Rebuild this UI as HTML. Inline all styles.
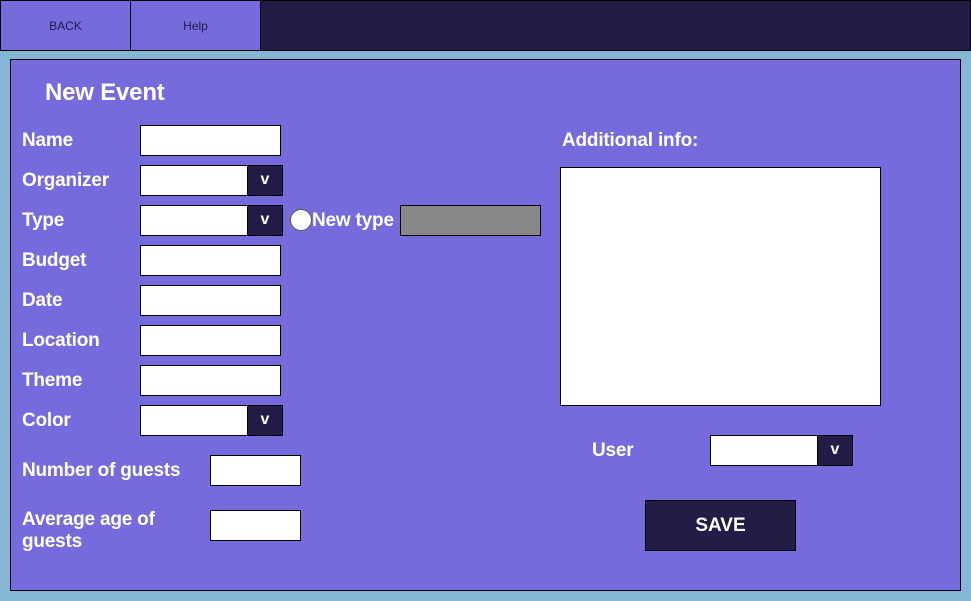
<!DOCTYPE html>
<html><head><style>
*{box-sizing:border-box;margin:0;padding:0}
body{width:971px;height:601px;background:#86b6d6;font-family:"Liberation Sans",sans-serif;position:relative;overflow:hidden}
.a{position:absolute}
.top{left:0;top:0;width:971px;height:51px;background:#221c47;border:1px solid #000}
.btn{top:0;height:51px;width:131px;background:#756bdd;border:1px solid #000;font-size:12px;color:#221c47;display:flex;align-items:center;justify-content:center}
.panel{left:10px;top:59px;width:951px;height:532px;background:#756bdd;border:1px solid #000}
.l{color:#fff;font-weight:bold;font-size:19px;line-height:22px;letter-spacing:-0.2px}
.in{background:#fff;border:1px solid #000;height:31px}
.dd{width:108px;background:#fff;border:1px solid #000;border-right:none;height:31px}
.dk{width:36px;height:31px;background:#221c47;border:1px solid #000;color:#fff;font-weight:bold;font-size:16px;display:flex;align-items:center;justify-content:center;padding-bottom:2px}
</style></head><body>
<div class="a top"></div>
<div class="a btn" style="left:0">BACK</div>
<div class="a btn" style="left:130px">Help</div>
<div class="a panel"></div>
<div class="a l" style="left:45px;top:79px;font-size:24px;line-height:28px">New Event</div>

<div class="a l" style="left:22px;top:130px">Name</div>
<div class="a in" style="left:140px;top:125px;width:141px"></div>
<div class="a l" style="left:22px;top:170px">Organizer</div>
<div class="a dd" style="left:140px;top:165px"></div><div class="a dk" style="left:247px;top:165px">v</div>
<div class="a l" style="left:22px;top:210px">Type</div>
<div class="a dd" style="left:140px;top:205px"></div><div class="a dk" style="left:247px;top:205px">v</div>
<div class="a" style="left:290px;top:209px;width:22px;height:22px;border-radius:50%;background:#fff;border:1px solid #555"></div>
<div class="a l" style="left:312px;top:210px">New type</div>
<div class="a" style="left:400px;top:205px;width:141px;height:31px;background:#888;border:1px solid #000"></div>
<div class="a l" style="left:22px;top:250px">Budget</div>
<div class="a in" style="left:140px;top:245px;width:141px"></div>
<div class="a l" style="left:22px;top:290px">Date</div>
<div class="a in" style="left:140px;top:285px;width:141px"></div>
<div class="a l" style="left:22px;top:330px">Location</div>
<div class="a in" style="left:140px;top:325px;width:141px"></div>
<div class="a l" style="left:22px;top:370px">Theme</div>
<div class="a in" style="left:140px;top:365px;width:141px"></div>
<div class="a l" style="left:22px;top:410px">Color</div>
<div class="a dd" style="left:140px;top:405px"></div><div class="a dk" style="left:247px;top:405px">v</div>
<div class="a l" style="left:22px;top:460px">Number of guests</div>
<div class="a in" style="left:210px;top:455px;width:91px"></div>
<div class="a l" style="left:22px;top:509px;line-height:22px">Average age of<br>guests</div>
<div class="a in" style="left:210px;top:510px;width:91px"></div>

<div class="a l" style="left:562px;top:130px">Additional info:</div>
<div class="a" style="left:560px;top:167px;width:321px;height:239px;background:#fff;border:1px solid #000"></div>
<div class="a l" style="left:592px;top:440px">User</div>
<div class="a dd" style="left:710px;top:435px"></div><div class="a dk" style="left:817px;top:435px">v</div>
<div class="a" style="left:645px;top:500px;width:151px;height:51px;background:#221c47;border:1px solid #000;color:#fff;font-weight:bold;font-size:19px;display:flex;align-items:center;justify-content:center">SAVE</div>
</body></html>
